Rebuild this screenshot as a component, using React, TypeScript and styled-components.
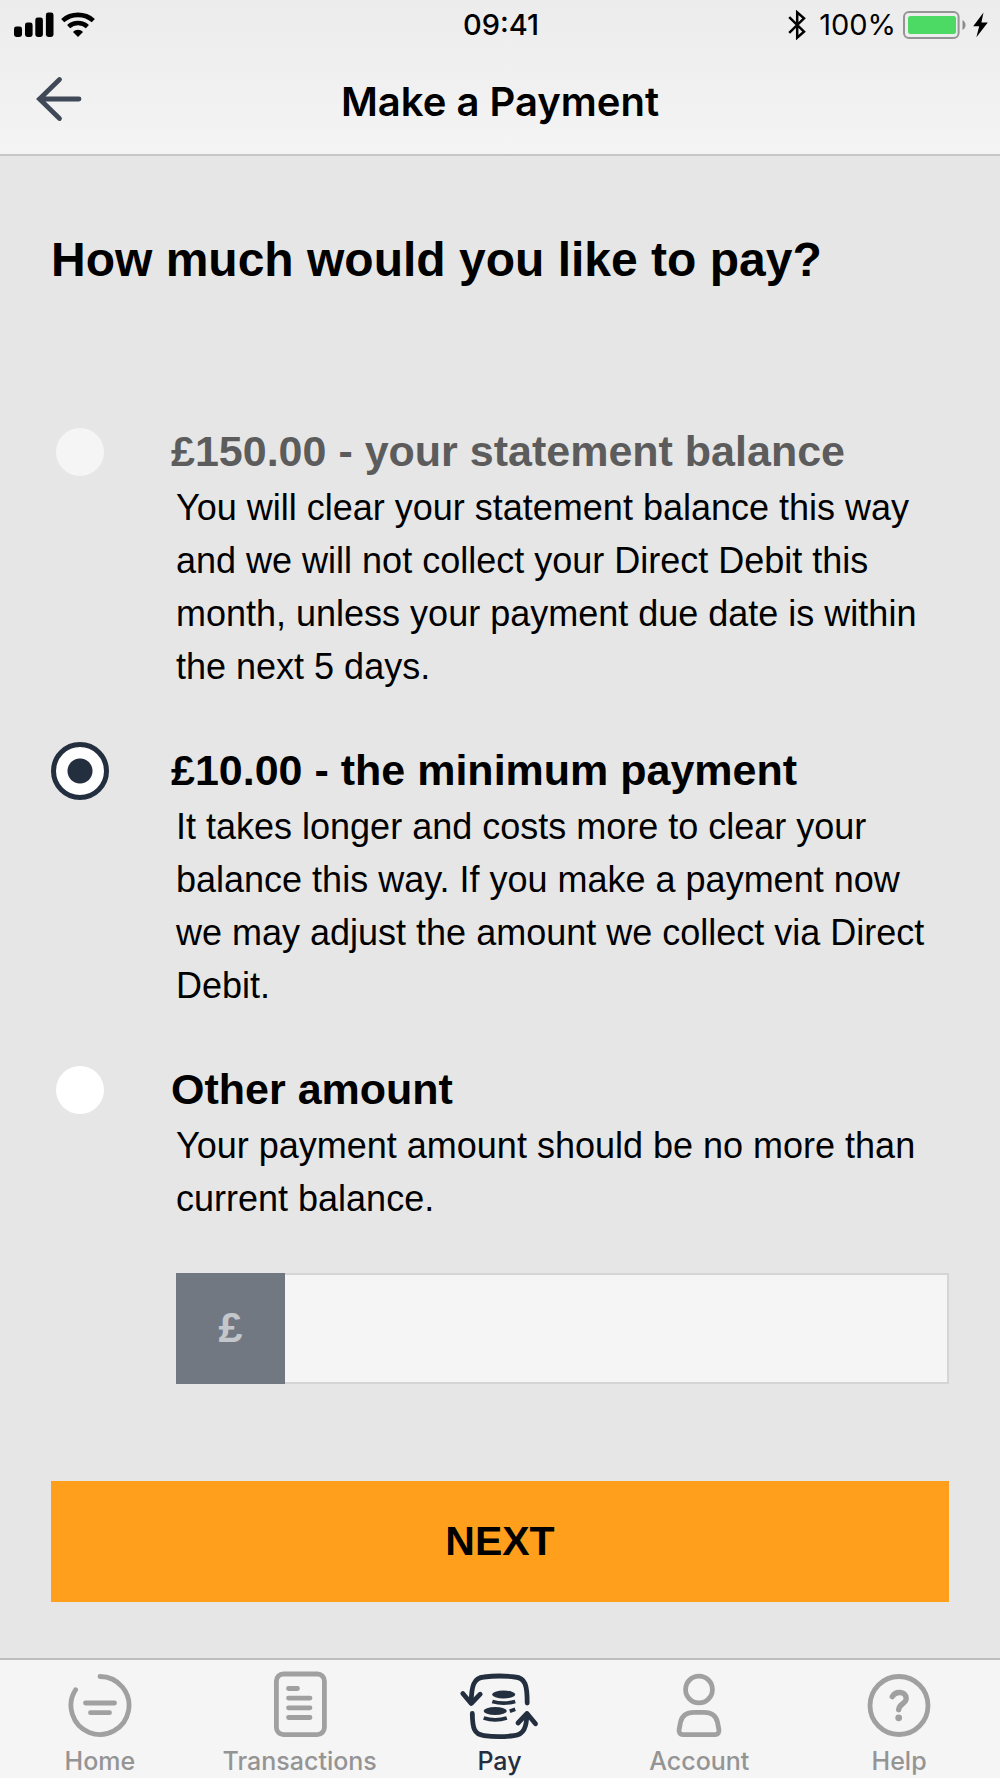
import React, { useState } from "react";
import styled, { createGlobalStyle } from "styled-components";

const ink = "#232f3e";

const GlobalStyle = createGlobalStyle`
  *, *::before, *::after { box-sizing: border-box; }
  body { margin: 0; background: #e6e6e6; }
`;

const Screen = styled.div`
  min-height: 100vh;
  display: flex;
  flex-direction: column;
  background: #e6e6e6;
  color: #000;
  font-family: "Liberation Sans", Arial, sans-serif;
`;

const Header = styled.header`
  background: linear-gradient(#ececec, #f4f4f4);
  border-bottom: 2px solid #c6c6c6;
  font-family: Inter, sans-serif;
`;

const StatusBar = styled.div`
  height: 50px;
  padding: 0 12px 0 14px;
  display: grid;
  grid-template-columns: 1fr auto 1fr;
  align-items: center;
`;

const StatusGroup = styled.div<{ $end?: boolean }>`
  display: flex;
  align-items: center;
  gap: 7px;
  justify-content: ${(p) => (p.$end ? "flex-end" : "flex-start")};
`;

const StatusText = styled.span<{ $strong?: boolean }>`
  font-size: 29px;
  line-height: 32px;
  font-weight: ${(p) => (p.$strong ? 500 : 400)};
`;

const BluetoothMark = styled.svg`
  width: 18px;
  height: 30px;
  margin-right: 6px;
  fill: none;
  stroke: #000;
  stroke-width: 2.5;
`;

const NavBar = styled.div`
  height: 104px;
  padding: 0 35px;
  display: grid;
  grid-template-columns: 1fr auto 1fr;
  align-items: center;
`;

const BackButton = styled.button`
  justify-self: start;
  display: flex;
  padding: 0 0 7px;
  border: 0;
  background: none;
  cursor: pointer;
`;

const NavTitle = styled.h1`
  margin: 0;
  font-size: 40px;
  line-height: 48px;
  font-weight: 600;
`;

const Content = styled.main`
  flex: 1;
  padding: 76px 51px 56px;
`;

const Question = styled.h2`
  margin: 0 0 136px;
  font-size: 48px;
  line-height: 56px;
  font-weight: 700;
`;

const Options = styled.div`
  display: grid;
  gap: 50px;
`;

const Option = styled.div`
  display: grid;
  grid-template-columns: 58px 1fr;
  column-gap: 62px;
  align-items: start;
`;

const Radio = styled.input`
  appearance: none;
  width: 58px;
  height: 58px;
  margin: -1px 0;
  border: 5px solid transparent;
  border-radius: 50%;
  background: #fff padding-box;
  cursor: pointer;

  &:checked {
    border-color: ${ink};
    background: radial-gradient(circle, ${ink} 12px, #fff 13px) padding-box;
  }

  &:disabled {
    background-color: #f5f5f5;
    cursor: default;
  }
`;

const OptionTitle = styled.label<{ $muted?: boolean }>`
  display: block;
  margin-bottom: 2px;
  font-size: 43px;
  line-height: 55px;
  font-weight: 700;
  color: ${(p) => (p.$muted ? "#5c5c5c" : "#000")};
`;

const Description = styled.p`
  margin: 0;
  padding-left: 5px;
  font-size: 36px;
  line-height: 53px;
`;

const AmountField = styled.div`
  display: flex;
  height: 111px;
  margin: 48px 0 0 5px;
`;

const Currency = styled.label`
  flex: none;
  width: 109px;
  display: flex;
  align-items: center;
  justify-content: center;
  padding-bottom: 2px;
  background: #727882;
  color: #c3c7cb;
  font-size: 43px;
  font-weight: 700;
`;

const AmountInput = styled.input`
  flex: 1;
  min-width: 0;
  padding: 0 24px;
  border: 2px solid #d5d5d5;
  border-left: 0;
  border-radius: 0;
  background: #f5f5f5;
  font: inherit;
  font-size: 36px;
`;

const NextButton = styled.button`
  display: block;
  width: 100%;
  height: 121px;
  margin-top: 97px;
  border: 0;
  background: #ff9f1c;
  color: #000;
  font: inherit;
  font-size: 41px;
  font-weight: 700;
  cursor: pointer;
`;

const TabBar = styled.nav`
  height: 120px;
  display: grid;
  grid-template-columns: repeat(5, 1fr);
  padding-right: 1px;
  border-top: 2px solid #bdbdbd;
  background: #f5f5f5;
  font-family: Inter, sans-serif;
`;

const Tab = styled.a<{ $active?: boolean }>`
  display: flex;
  flex-direction: column;
  align-items: center;
  gap: 8px;
  padding-top: 11px;
  color: ${(p) => (p.$active ? ink : "#a0a0a0")};
  text-decoration: none;
`;

const TabLabel = styled.span<{ $active?: boolean }>`
  font-size: 25px;
  line-height: 28px;
  font-weight: 500;
  color: ${(p) => (p.$active ? ink : "#949494")};
`;

const TabSvg = styled.svg`
  display: block;
  width: 80px;
  height: 68px;
  fill: none;
  stroke: currentColor;
  stroke-width: 4.8;
  stroke-linecap: round;
  stroke-linejoin: round;
`;

const SignalIcon = () => (
  <svg width="40" height="26" viewBox="0 0 40 26" aria-hidden="true">
    <rect x="0" y="14.5" width="8" height="10.5" rx="2.4" />
    <rect x="11" y="10.5" width="7.6" height="14.5" rx="2.4" />
    <rect x="21.3" y="5.5" width="7.6" height="19.5" rx="2.4" />
    <rect x="31.9" y="0.5" width="7.6" height="24.5" rx="2.4" />
  </svg>
);

const WifiIcon = () => (
  <svg width="34" height="26" viewBox="0 0 34 26" aria-hidden="true">
    <path d="M1.7 8.6C10.2.9 23.8.9 32.3 8.6M7.6 14.6C13 9.8 21 9.8 26.4 14.6" fill="none" stroke="#000" strokeWidth="4.6" />
    <path d="M17 25l-5-5c2.8-2.9 7.2-2.9 10 0z" />
  </svg>
);

const BluetoothIcon = () => (
  <BluetoothMark viewBox="0 0 18 30" aria-hidden="true">
    <path d="M1.2 7.2L16 21.6 9.2 27.6V2.4L16 8.4 1.2 22.8" />
  </BluetoothMark>
);

const BatteryIcon = () => (
  <svg width="63" height="28" viewBox="0 0 63 28" aria-hidden="true">
    <rect x="1" y="1" width="54.6" height="26" rx="5" fill="none" stroke="#959595" strokeWidth="2" />
    <rect x="5" y="5" width="48" height="18" rx="2.5" fill="#4cd964" />
    <path d="M59.5 9c4 2 4 8 0 10z" fill="#8c8c8c" />
  </svg>
);

const BoltIcon = () => (
  <svg width="15" height="26" viewBox="0 0 15 26" aria-hidden="true">
    <path d="M10.5.5L.2 14.3h6L3.4 25.2 14.8 10.6H8.4z" />
  </svg>
);

const BackIcon = () => (
  <svg width="48" height="46" viewBox="0 0 48 46" fill="none" stroke="#3f4957" strokeWidth="4.8" strokeLinecap="round" aria-hidden="true">
    <path d="M24.5 3.5L4.5 23l20 19.5M4.5 23H44" />
  </svg>
);

const HomeIcon = () => (
  <TabSvg viewBox="0 0 80 68" aria-hidden="true">
    <path d="M40 5.5A29 29 0 1 1 15.6 18.8M25.5 32h29M30.5 41.7h19" />
  </TabSvg>
);

const TransactionsIcon = () => (
  <TabSvg viewBox="0 0 80 68" aria-hidden="true">
    <rect x="16.4" y="3" width="48" height="60.6" rx="7" />
    <path d="M28.5 17.5h9M28.5 27.1h21.5M28.5 36.8h21.5M28.5 46.5h21.5" />
  </TabSvg>
);

const PayIcon = () => (
  <TabSvg viewBox="0 0 80 68" aria-hidden="true">
    <path d="M68.2 32C68.2 14.5 66.5 6.8 56 6Q40.5 4 25 6C14.5 6.8 12.5 15 12.2 31.5" />
    <path d="M3.8 22.5L12.2 32.5 21.2 23.2" />
    <path d="M13.3 42.5C13.5 57 15 63.5 25 64.6Q40 66.6 55 64.6C65 63.5 67.5 56 68 43" />
    <path d="M59 52L68 42.5 76.5 52.8" />
    <g stroke="none" fill="currentColor">
      <ellipse cx="44.7" cy="23.5" rx="11.6" ry="4" />
      <ellipse cx="36.2" cy="40" rx="11.6" ry="4" />
    </g>
    <g strokeWidth="3.8" strokeLinecap="butt">
      <path d="M33.3 30.5Q44.7 33.8 56.2 30.5" />
      <path d="M24.7 47Q36.2 50.8 47.8 47" />
      <path d="M50.8 40.2L56.2 38.2" />
    </g>
  </TabSvg>
);

const AccountIcon = () => (
  <TabSvg viewBox="0 0 80 68" aria-hidden="true">
    <circle cx="40" cy="18.5" r="13.4" />
    <path d="M35 41.3h10c9.5 0 12.5 5 13.5 10l1.4 7.5c.4 3-1 4.8-3.9 4.8H24c-2.9 0-4.3-1.8-3.9-4.8l1.4-7.5c1-5 4-10 13.5-10z" />
  </TabSvg>
);

const HelpIcon = () => (
  <TabSvg viewBox="0 0 80 68" aria-hidden="true">
    <circle cx="40" cy="34.5" r="29" />
    <path d="M33.3 25.6C36 20 47 19.6 47.2 27.4 47.3 33 40 32.5 39.7 38.7" strokeWidth="5.4" />
    <circle cx="39.7" cy="46.8" r="3.4" fill="currentColor" stroke="none" />
  </TabSvg>
);

const options = [
  {
    id: "statement",
    title: "£150.00 - your statement balance",
    text: "You will clear your statement balance this way and we will not collect your Direct Debit this month, unless your payment due date is within the next 5 days.",
    disabled: true,
  },
  {
    id: "minimum",
    title: "£10.00 - the minimum payment",
    text: "It takes longer and costs more to clear your balance this way. If you make a payment now we may adjust the amount we collect via Direct Debit.",
  },
  {
    id: "other",
    title: "Other amount",
    text: "Your payment amount should be no more than current balance.",
    hasAmount: true,
  },
];

const tabs = [
  { label: "Home", Icon: HomeIcon },
  { label: "Transactions", Icon: TransactionsIcon },
  { label: "Pay", Icon: PayIcon },
  { label: "Account", Icon: AccountIcon },
  { label: "Help", Icon: HelpIcon },
];

export default function App() {
  const [selected, setSelected] = useState("minimum");
  const [amount, setAmount] = useState("");

  return (
    <>
      <GlobalStyle />
      <Screen>
        <Header>
          <StatusBar>
            <StatusGroup>
              <SignalIcon />
              <WifiIcon />
            </StatusGroup>
            <StatusText $strong>09:41</StatusText>
            <StatusGroup $end>
              <BluetoothIcon />
              <StatusText>100%</StatusText>
              <BatteryIcon />
              <BoltIcon />
            </StatusGroup>
          </StatusBar>
          <NavBar>
            <BackButton type="button" aria-label="Back">
              <BackIcon />
            </BackButton>
            <NavTitle>Make a Payment</NavTitle>
          </NavBar>
        </Header>

        <Content>
          <Question id="question">How much would you like to pay?</Question>
          <Options role="radiogroup" aria-labelledby="question">
            {options.map((o) => (
              <Option key={o.id}>
                <Radio
                  type="radio"
                  name="payment"
                  id={o.id}
                  checked={selected === o.id}
                  disabled={o.disabled}
                  onChange={() => setSelected(o.id)}
                />
                <div>
                  <OptionTitle htmlFor={o.id} $muted={o.disabled}>
                    {o.title}
                  </OptionTitle>
                  <Description>{o.text}</Description>
                  {o.hasAmount && (
                    <AmountField>
                      <Currency htmlFor="amount">£</Currency>
                      <AmountInput
                        id="amount"
                        type="text"
                        inputMode="decimal"
                        value={amount}
                        onChange={(e) => setAmount(e.target.value)}
                      />
                    </AmountField>
                  )}
                </div>
              </Option>
            ))}
          </Options>
          <NextButton type="button">NEXT</NextButton>
        </Content>

        <TabBar>
          {tabs.map(({ label, Icon }) => (
            <Tab key={label} href="#" $active={label === "Pay"}>
              <Icon />
              <TabLabel $active={label === "Pay"}>{label}</TabLabel>
            </Tab>
          ))}
        </TabBar>
      </Screen>
    </>
  );
}
